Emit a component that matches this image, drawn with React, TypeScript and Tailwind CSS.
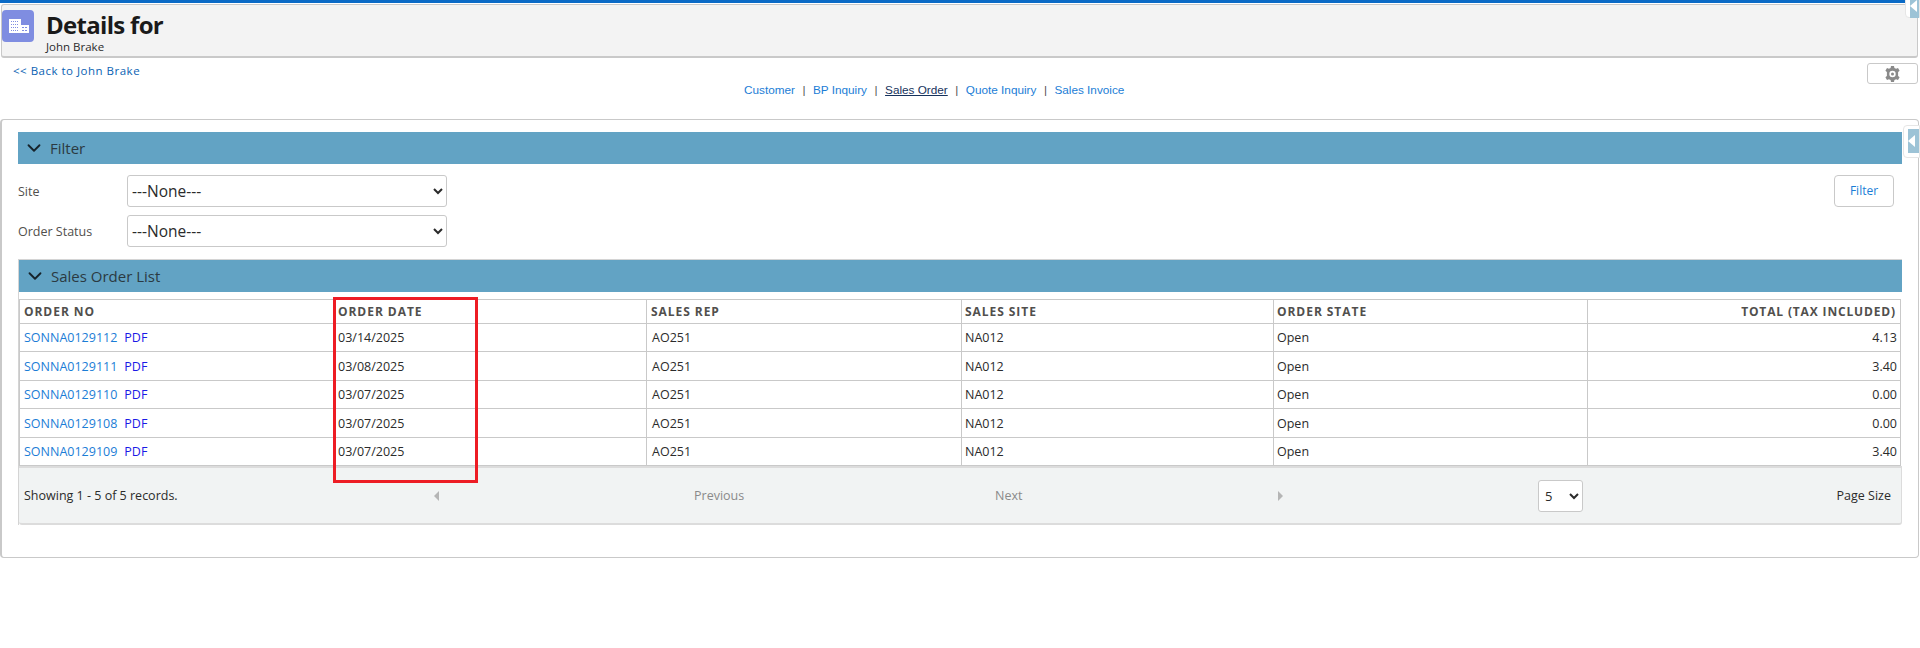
import { ChevronDown } from 'lucide-react';

const orders = [
  { no: 'SONNA0129112', date: '03/14/2025', total: '4.13', h: 'h-[28px]' },
  { no: 'SONNA0129111', date: '03/08/2025', total: '3.40', h: 'h-[29px]' },
  { no: 'SONNA0129110', date: '03/07/2025', total: '0.00', h: 'h-[28px]' },
  { no: 'SONNA0129108', date: '03/07/2025', total: '0.00', h: 'h-[29px]' },
  { no: 'SONNA0129109', date: '03/07/2025', total: '3.40', h: 'h-[28px]' },
];

const tabs = ['Customer', 'BP Inquiry', 'Sales Order', 'Quote Inquiry', 'Sales Invoice'];

const headCell = 'border border-[#c9c9c9] px-[3px] text-left text-[12px] font-bold tracking-[0.95px] text-[#514f4d]';
const bodyCell = 'border border-[#c9c9c9] px-[3px] pt-[2px] text-[12.5px] text-[#2b2b2b]';

function BuildingIcon() {
  return (
    <svg width="32" height="32" viewBox="0 0 32 32" className="rounded-[4px] bg-[#7f8de1]">
      <rect x="7" y="9" width="12" height="14" fill="#fff" />
      <rect x="18" y="15" width="9" height="8" fill="#fff" />
      <path d="M9 11.500h7M9 14.500h7M9 17.500h7M9 20.500h7" stroke="#7f8de1" strokeWidth="1" strokeDasharray="1 1" />
      <path d="M20 17.500h5M20 20.500h5" stroke="#7f8de1" strokeWidth="1" strokeDasharray="2 1" />
      <rect x="19" y="9" width="1" height="6" fill="#7f8de1" />
    </svg>
  );
}

function GearIcon() {
  return (
    <svg width="15" height="16" viewBox="0 0 15 16">
      <path
        d="M6 0h3l.4 2 1.700.8L13 2l1.600 2.700-1.500 1.400v3.800l1.500 1.400L13 14l-1.900-.8-1.700.8L9 16H6l-.4-2-1.700-.8L2 14 .4 11.300l1.500-1.400V6.100L.4 4.700 2 2l1.900.8L5.600 2z"
        fill="#8a8a8a"
      />
      <circle cx="7.500" cy="8" r="3.200" fill="#fff" />
      <circle cx="7.500" cy="8" r="1.500" fill="#8a8a8a" />
    </svg>
  );
}

function SectionBar({ title }: { title: string }) {
  return (
    <div className="flex h-[32px] items-center bg-[#62a3c4] pl-[5px] text-[#2b3a42]">
      <ChevronDown size={22} strokeWidth={2} className="text-[#16232b]" />
      <span className="ml-[5px] text-[15px]">{title}</span>
    </div>
  );
}

function SideTab({ className }: { className: string }) {
  return (
    <div className={`absolute rounded-l-[4px] border border-[#e6e6e6] bg-white ${className}`}>
      <div className="ml-[4px] mt-[3px] flex h-[24px] items-center bg-[#9dc3d6]">
        <div className="h-0 w-0 border-y-[6px] border-r-[7px] border-y-transparent border-r-white" />
      </div>
    </div>
  );
}

export default function App() {
  return (
    <div className="relative h-[648px] w-[1920px] overflow-hidden bg-white font-['Open_Sans',sans-serif] text-[#16325c]">
      <div className="h-[3px] bg-[#0a6ac6]" />

      {/* Page header */}
      <div className="ml-px mt-px flex h-[54px] w-[1917px] rounded-[3px] border border-b-2 border-[#c9c9c9] bg-[#f3f3f3]">
        <div className="mt-[5px]">
          <BuildingIcon />
        </div>
        <div className="ml-[12px] flex flex-col">
          <div className="mt-[5px] text-[24px] font-bold leading-[29px] tracking-[-0.7px] text-[#1a1a1a]">Details for</div>
          <div className="text-[11.500px] leading-[15px] text-[#2b2b2b]">John Brake</div>
        </div>
      </div>

      {/* Links row */}
      <div className="grid h-[61px] grid-cols-[744px_1fr_auto]">
        <a className="pl-[13px] pt-[5px] text-[11.500px] leading-[16px] tracking-[0.5px] text-[#0a62b3]">
          &lt;&lt; Back to John Brake
        </a>
        <div className="flex items-start pt-[25px] font-['Liberation_Sans',sans-serif] text-[11.750px] leading-[14px] text-[#1b7dd6]">
          {tabs.map((tab, i) => (
            <span key={tab} className="flex">
              {i > 0 && <span className="mx-[7.500px] text-[#555]">|</span>}
              <a className={tab === 'Sales Order' ? 'text-[#16325c] underline' : ''}>{tab}</a>
            </span>
          ))}
        </div>
        <div className="pr-[2px] pt-[5px]">
          <button className="flex h-[21px] w-[51px] items-center justify-center rounded-[3px] border border-[#c9c9c9] bg-white">
            <GearIcon />
          </button>
        </div>
      </div>

      {/* Main panel */}
      <div className="h-[439px] w-[1919px] rounded-[4px] border border-l-2 border-[#c9c9c9] pl-[16px] pt-[12px]">
        <div className="w-[1884px]">
          <SectionBar title="Filter" />

          <div className="mt-[11px] flex justify-between pr-[8px] text-[12.500px] text-[#514f4d]">
            <div className="grid grid-cols-[109px_320px] items-center gap-y-[8px]">
              <label className="pt-[2px]">Site</label>
              <select className="h-[32px] rounded-[3px] border border-[#c9c9c9] bg-white text-[15.500px] text-[#2b2b2b]">
                <option>---None---</option>
              </select>
              <label className="pt-[2px]">Order Status</label>
              <select className="h-[32px] rounded-[3px] border border-[#c9c9c9] bg-white text-[15.500px] text-[#2b2b2b]">
                <option>---None---</option>
              </select>
            </div>
            <button className="h-[32px] w-[60px] rounded-[4px] border border-[#c9c9c9] bg-white text-[12px] text-[#1b7dd6]">
              Filter
            </button>
          </div>

          {/* Sales order list */}
          <div className="relative mt-[12px] border-l border-t border-[#d4d4d4]">
            <SectionBar title="Sales Order List" />
            <table className="mt-[7px] w-[1881px] table-fixed border-collapse">
              <colgroup>
                <col className="w-[315px]" />
                <col className="w-[312px]" />
                <col className="w-[315px]" />
                <col className="w-[312px]" />
                <col className="w-[314px]" />
                <col className="w-[313px]" />
              </colgroup>
              <thead>
                <tr className="h-[24px]">
                  <th className={`${headCell} !pl-[4px]`}>ORDER NO</th>
                  <th className={headCell}>ORDER DATE</th>
                  <th className={`${headCell} !pl-[4px]`}>SALES REP</th>
                  <th className={headCell}>SALES SITE</th>
                  <th className={headCell}>ORDER STATE</th>
                  <th className={`${headCell} !pr-[4px] !text-right !tracking-[0.85px]`}>TOTAL (TAX INCLUDED)</th>
                </tr>
              </thead>
              <tbody>
                {orders.map((o) => (
                  <tr key={o.no} className={o.h}>
                    <td className={`${bodyCell} !pl-[4px]`}>
                      <a className="text-[#1b7dd6]">{o.no}</a>
                      <a className="ml-[7px] text-[#1a1ae6]">PDF</a>
                    </td>
                    <td className={bodyCell}>{o.date}</td>
                    <td className={`${bodyCell} !pl-[5px]`}>AO251</td>
                    <td className={bodyCell}>NA012</td>
                    <td className={bodyCell}>Open</td>
                    <td className={`${bodyCell} text-right`}>{o.total}</td>
                  </tr>
                ))}
              </tbody>
            </table>

            {/* Pager */}
            <div className="flex h-[59px] items-center rounded-b-[3px] border-y-2 border-r border-y-[#dcdcdc] border-r-[#dcdcdc] bg-[#f1f3f3] text-[12.500px]">
              <span className="w-[415px] pl-[5px] pt-[2px] text-[#2b2b2b]">Showing 1 - 5 of 5 records.</span>
              <span className="h-0 w-0 border-y-[5px] border-r-[5px] border-y-transparent border-r-[#b5b5b5]" />
              <span className="ml-[255px] w-[301px] pt-[2px] text-[#8a8a8a]">Previous</span>
              <span className="w-[283px] pt-[2px] text-[#8a8a8a]">Next</span>
              <span className="h-0 w-0 border-y-[5px] border-l-[5px] border-y-transparent border-l-[#b5b5b5]" />
              <select className="ml-[255px] h-[32px] w-[45px] rounded-[3px] border border-[#c9c9c9] bg-white pl-[2px] text-[13px] text-[#2b2b2b]">
                <option>5</option>
              </select>
              <span className="ml-auto pr-[10px] pt-[2px] text-[#2b2b2b]">Page Size</span>
            </div>

            {/* Annotation drawn on the screenshot */}
            <div className="absolute left-[314px] top-[37px] h-[186px] w-[145px] border-[3px] border-[#ed1c24]" />
          </div>
        </div>
      </div>

      <SideTab className="right-0 top-[-10px] h-[28px] w-[15px]" />
      <SideTab className="right-0 top-[125px] h-[33px] w-[17px]" />
    </div>
  );
}
